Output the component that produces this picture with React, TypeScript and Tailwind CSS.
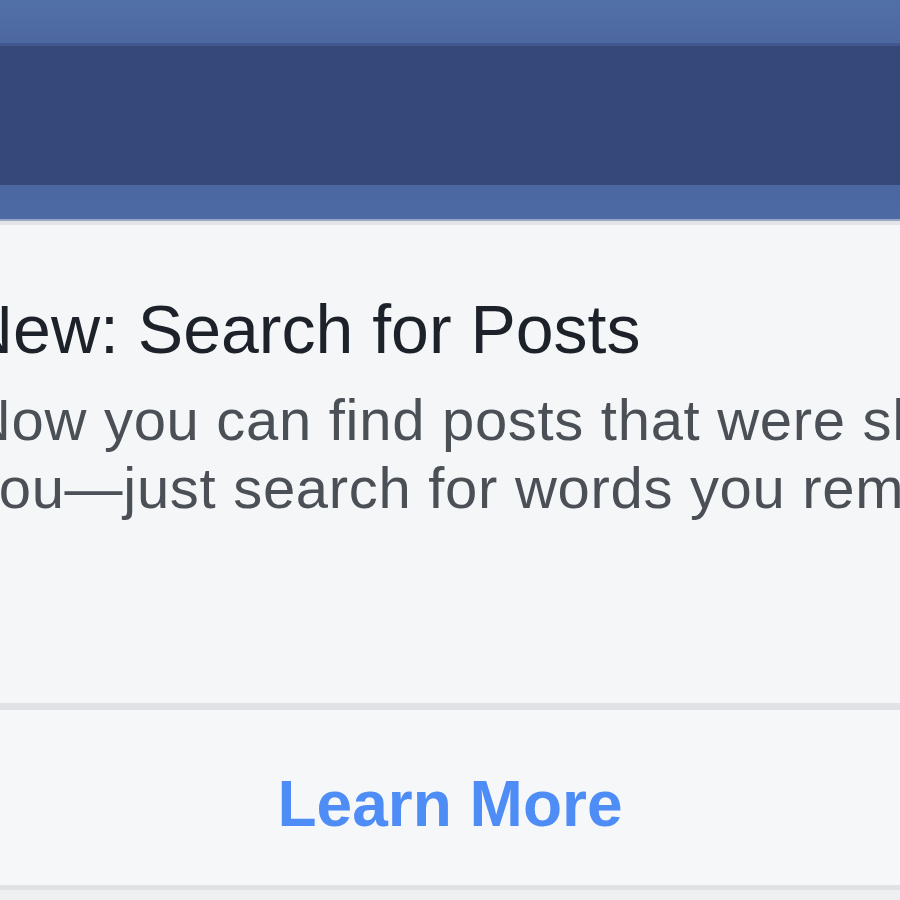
export default function App() {
  return (
    <div className="w-[900px] h-[900px] overflow-hidden bg-[#f5f6f8] flex flex-col" style={{ fontFamily: '"Liberation Sans", Arial, sans-serif' }}>
      <div className="h-[43px] bg-gradient-to-b from-[#5270a8] to-[#4d68a1]" />
      <div className="h-[3px] bg-[#42578f]" />
      <div className="h-[139px] bg-[#36477a]" />
      <div className="h-[34px] bg-gradient-to-b from-[#4b67a2] to-[#4e6aa5]" />
      <div className="h-[2px] bg-[#9aa6c4]" />
      <div className="h-[4px] bg-[#e4e5e8]" />
      <div className="h-[478px] flex flex-col">
        <div className="pt-[69px] -ml-[36px] text-[68px] leading-[70px] text-[#1d2129] whitespace-nowrap">New: Search for Posts</div>
        <div className="mt-[22px] -ml-[31px] text-[58px] leading-[68px] tracking-[0.7px] text-[#4b4f56] whitespace-nowrap">
          <div>Now you can find posts that were shared with</div>
          <div>you—just search for words you remember</div>
        </div>
      </div>
      <div className="h-[7px] bg-[#e1e2e5]" />
      <div className="h-[175px] bg-[#f6f7f9] flex items-center justify-center">
        <span className="text-[64px] font-bold text-[#4e8cf6] leading-none mt-[12px]">Learn More</span>
      </div>
      <div className="h-[5px] bg-[#e1e2e5]" />
      <div className="flex-1 bg-[#eeeff1]" />
    </div>
  );
}
